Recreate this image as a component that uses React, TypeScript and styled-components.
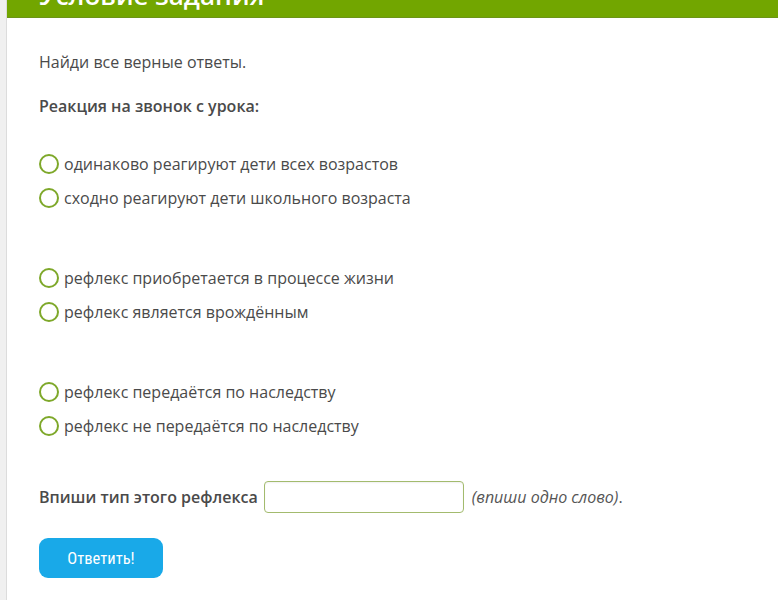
import styled, { createGlobalStyle } from "styled-components";

const Global = createGlobalStyle`
  body {
    margin: 0;
    background: #fff;
    font-family: "Open Sans", "Noto Sans", sans-serif;
    color: #4a4a4a;
  }
`;

const groups = [
  ["одинаково реагируют дети всех возрастов", "сходно реагируют дети школьного возраста"],
  ["рефлекс приобретается в процессе жизни", "рефлекс является врождённым"],
  ["рефлекс передаётся по наследству", "рефлекс не передаётся по наследству"],
];

const App = () => {
  return (
    <>
      <Global />
      <Page>
        <Side />
        <Panel>
          <Header>
            <Title>Условие задания</Title>
          </Header>
          <Content>
            <Lead>Найди все верные ответы.</Lead>
            <Question>Реакция на звонок с урока:</Question>
            {groups.map((g, i) => (
              <Group key={i} $last={i === groups.length - 1}>
                {g.map((opt) => (
                  <Option key={opt}>
                    <Radio />
                    {opt}
                  </Option>
                ))}
              </Group>
            ))}
            <InputRow>
              <Label>Впиши тип этого рефлекса</Label>
              <Field type="text" />
              <Hint>
                <em>(впиши одно слово)</em>.
              </Hint>
            </InputRow>
            <Submit>Ответить!</Submit>
          </Content>
        </Panel>
      </Page>
    </>
  );
};

export default App;

const Page = styled.div`
  display: flex;
  min-height: 600px;
`;

const Side = styled.div`
  width: 6px;
  flex: none;
  background: #f0f0f0;
  border-right: 1px solid #dcdcdc;
`;

const Panel = styled.div`
  flex: 1;
  background: #fff;
`;

const Header = styled.div`
  height: 17px;
  background: #72a600;
  border-bottom: 1px solid #6c9418;
  overflow: hidden;
  padding-left: 32px;
`;

const Title = styled.div`
  margin-top: -18px;
  font-size: 26px;
  line-height: 26px;
  font-weight: 600;
  color: #fff;
`;

const Content = styled.div`
  padding: 32px 0 0 32px;
  font-size: 16px;
  line-height: 24px;
`;

const Lead = styled.p`
  margin: 0 0 20px;
`;

const Question = styled.p`
  margin: 0 0 34px;
  font-weight: 600;
`;

const Group = styled.div<{ $last?: boolean }>`
  display: flex;
  flex-direction: column;
  gap: 9.5px;
  margin-bottom: ${(p) => (p.$last ? "43.5px" : "56.5px")};
`;

const Option = styled.div`
  display: flex;
  align-items: center;
  gap: 5px;
  height: 24px;
`;

const Radio = styled.span`
  width: 16px;
  height: 16px;
  border: 2px solid #7ea82a;
  border-radius: 50%;
  flex: none;
`;

const InputRow = styled.div`
  display: flex;
  align-items: center;
  height: 32px;
  margin-bottom: 25px;
`;

const Label = styled.span`
  font-weight: 600;
`;

const Field = styled.input`
  box-sizing: border-box;
  width: 200px;
  height: 32px;
  margin: 0 8px 0 6px;
  border: 1px solid #a3bb6e;
  border-radius: 4px;
  box-shadow: inset 0 1px 2px rgba(0, 0, 0, 0.06);
  outline: none;
`;

const Hint = styled.span`
  color: #555;
  em {
    font-style: italic;
  }
`;

const Submit = styled.button`
  width: 124px;
  height: 40px;
  border: none;
  border-radius: 9px;
  background: #19a9e8;
  color: #fff;
  font-family: "Liberation Sans Narrow", "Roboto Condensed", Roboto, sans-serif;
  font-size: 16.5px;
  cursor: pointer;
`;
